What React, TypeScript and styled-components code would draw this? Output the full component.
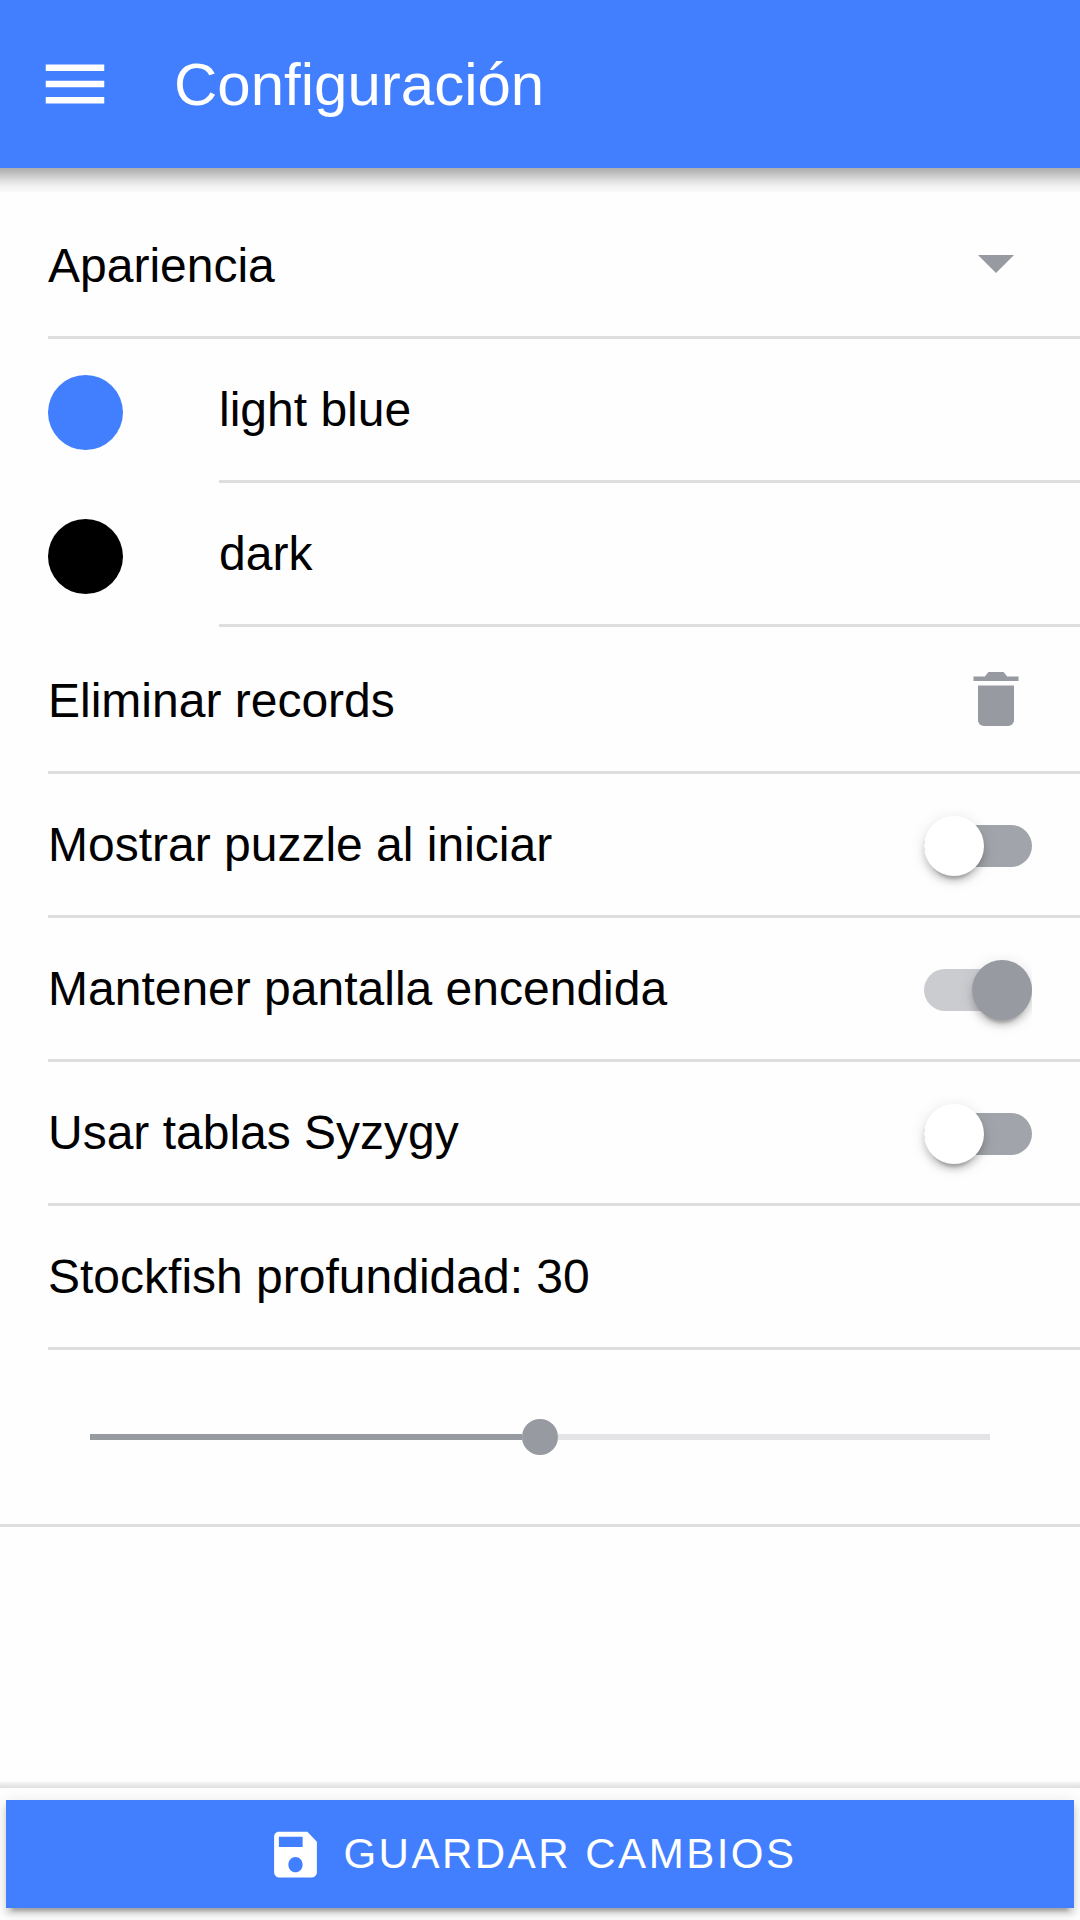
import React from "react";
import styled, { createGlobalStyle } from "styled-components";

const Global = createGlobalStyle`
  * { box-sizing: border-box; }
  body { margin: 0; background: #fefefe; }
`;

const Page = styled.div`
  width: 1080px;
  height: 1920px;
  display: flex;
  flex-direction: column;
  overflow: hidden;
  background: #fefefe;
  color: #000;
  font-family: "Liberation Sans", Arial, sans-serif;
  font-size: 48px;
`;

const Header = styled.header`
  height: 168px;
  flex: none;
  display: flex;
  align-items: center;
  padding-left: 36px;
  background: #427fff;
  color: #fff;
`;

const HeaderShade = styled.div`
  height: 24px;
  flex: none;
  background: linear-gradient(#adadad 0, #c2c2c2 25%, #dddddd 50%, #f1f1f1 75%, #f9f9f9 100%);
`;

const MenuButton = styled.button`
  display: flex;
  width: 78px;
  padding: 0;
  border: 0;
  background: none;
  color: inherit;
`;

const Title = styled.h1`
  margin: 0 0 0 60px;
  padding-top: 2px;
  font-size: 60px;
  font-weight: 400;
  line-height: 72px;
`;

const Content = styled.main`
  flex: 1;
`;

const List = styled.div`
  display: flex;
  flex-direction: column;
`;

const Item = styled.div<{ $height?: number }>`
  display: flex;
  height: ${(p) => p.$height ?? 144}px;
  padding-left: 48px;
`;

const ItemInner = styled.div`
  flex: 1;
  display: flex;
  align-items: center;
  justify-content: space-between;
  padding-right: 48px;
  border-bottom: 3px solid #dedede;
`;

const Label = styled.span<{ $drop?: boolean }>`
  padding-top: ${(p) => (p.$drop ? 3 : 0)}px;
  line-height: 56px;
  white-space: nowrap;
`;

const Swatch = styled.span<{ $color: string }>`
  width: 75px;
  height: 75px;
  margin: 36px 96px 0 0;
  border-radius: 50%;
  background: ${(p) => p.$color};
`;

const IconBox = styled.span`
  display: flex;
  width: 72px;
  height: 72px;
  color: #989aa2;
`;

const Track = styled.span<{ $on: boolean }>`
  display: flex;
  align-items: center;
  justify-content: ${(p) => (p.$on ? "flex-end" : "flex-start")};
  width: 108px;
  height: 42px;
  margin-top: 3px;
  border-radius: 21px;
  background: ${(p) => (p.$on ? "#cbccd0" : "#a2a4ab")};
  clip-path: inset(-40px 0 -40px -40px);
`;

const Knob = styled.span<{ $on: boolean }>`
  width: 60px;
  height: 60px;
  flex: none;
  border-radius: 50%;
  background: ${(p) => (p.$on ? "#989aa2" : "#fff")};
  box-shadow: 0 9px 3px -6px rgba(0, 0, 0, 0.2), 0 6px 6px 0 rgba(0, 0, 0, 0.14), 0 3px 15px 0 rgba(0, 0, 0, 0.12);
`;

const RangeItem = styled.div`
  height: 177px;
  display: flex;
  align-items: center;
  padding: 0 90px;
  border-bottom: 3px solid #dedede;
`;

const Filled = styled.span`
  flex: 1;
  height: 6px;
  background: #989aa2;
`;

const Rest = styled(Filled)`
  background: #e4e4e6;
`;

const Thumb = styled.span`
  width: 36px;
  height: 36px;
  border-radius: 50%;
  background: #989aa2;
`;

const FooterShade = styled.div`
  height: 6px;
  flex: none;
  background: linear-gradient(#f5f5f5, #dfdfdf);
`;

const Footer = styled.footer`
  height: 132px;
  flex: none;
  padding: 12px 6px;
  overflow: hidden;
`;

const SaveButton = styled.button`
  display: flex;
  align-items: center;
  justify-content: center;
  width: 100%;
  height: 108px;
  padding: 0;
  border: 0;
  background: #427fff;
  color: #fff;
  font: 400 42px "Liberation Sans", Arial, sans-serif;
  letter-spacing: 2.52px;
  text-transform: uppercase;
  box-shadow: 0 9px 3px -6px rgba(0, 0, 0, 0.2), 0 6px 6px 0 rgba(0, 0, 0, 0.14), 0 3px 15px 0 rgba(0, 0, 0, 0.12);

  svg { margin: 0 19px 0 -16px; }
`;

const Toggle = ({ on }: { on: boolean }) => (
  <Track $on={on}>
    <Knob $on={on} />
  </Track>
);

const themes = [
  { name: "light blue", color: "#427fff" },
  { name: "dark", color: "#000" },
];

const toggles = [
  { label: "Mostrar puzzle al iniciar", on: false },
  { label: "Mantener pantalla encendida", on: true },
  { label: "Usar tablas Syzygy", on: false },
];

export default function App() {
  return (
    <Page>
      <Global />
      <Header>
        <MenuButton aria-label="Menú">
          <svg width="78" height="78" viewBox="0 0 512 512" fill="currentColor">
            <path d="M64 384h384v-42.666H64V384zm0-106.666h384v-42.667H64v42.667zM64 128v42.665h384V128H64z" />
          </svg>
        </MenuButton>
        <Title>Configuración</Title>
      </Header>
      <HeaderShade />
      <Content>
        <List>
          <Item $height={147}>
            <ItemInner>
              <Label $drop>Apariencia</Label>
              <IconBox>
                <svg width="72" height="72" viewBox="0 0 512 512" fill="currentColor">
                  <path d="M128 192l128 128 128-128z" />
                </svg>
              </IconBox>
            </ItemInner>
          </Item>
          {themes.map((t) => (
            <Item key={t.name}>
              <Swatch $color={t.color} />
              <ItemInner>
                <Label>{t.name}</Label>
              </ItemInner>
            </Item>
          ))}
          <Item $height={147}>
            <ItemInner>
              <Label $drop>Eliminar records</Label>
              <IconBox>
                <svg width="72" height="72" viewBox="0 0 512 512" fill="currentColor">
                  <path d="M128 405.429C128 428.846 147.198 448 170.667 448h170.667C364.802 448 384 428.846 384 405.429V160H128v245.429zM416 96h-80l-26.785-32H202.786L176 96H96v32h320V96z" />
                </svg>
              </IconBox>
            </ItemInner>
          </Item>
          {toggles.map((t) => (
            <Item key={t.label}>
              <ItemInner>
                <Label>{t.label}</Label>
                <Toggle on={t.on} />
              </ItemInner>
            </Item>
          ))}
          <Item>
            <ItemInner>
              <Label>Stockfish profundidad: 30</Label>
            </ItemInner>
          </Item>
          <RangeItem>
            <Filled />
            <Thumb />
            <Rest />
          </RangeItem>
        </List>
      </Content>
      <FooterShade />
      <Footer>
        <SaveButton>
          <svg width="57" height="61" viewBox="0 0 512 512" preserveAspectRatio="none" fill="currentColor">
            <path d="M362.7 64h-256C83 64 64 83.2 64 106.7v298.7c0 23.5 19 42.7 42.7 42.7h298.7c23.5 0 42.7-19.2 42.7-42.7v-256L362.7 64zM256 405.3c-35.4 0-64-28.6-64-64s28.6-64 64-64 64 28.6 64 64-28.6 64-64 64zM320 192H106.7v-85.3H320V192z" />
          </svg>
          Guardar cambios
        </SaveButton>
      </Footer>
    </Page>
  );
}
